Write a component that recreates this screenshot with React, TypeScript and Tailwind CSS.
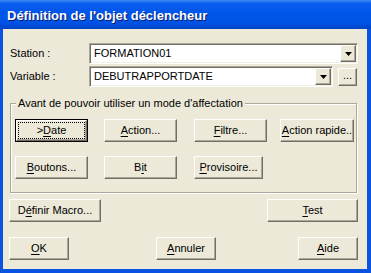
import React from "react";

function Raised({ className = "", children }: { className?: string; children?: React.ReactNode }) {
  return (
    <div
      className={
        "bg-[#ECE9D8] border border-t-white border-l-white border-r-[#716F64] border-b-[#716F64] shadow-[inset_-1px_-1px_0_#ACA899] flex items-center justify-center shrink-0 " +
        className
      }
    >
      {children}
    </div>
  );
}

function DefaultBtn({ className = "", children }: { className?: string; children?: React.ReactNode }) {
  return (
    <div className={"border border-black flex shrink-0 " + className}>
      <div className="relative flex-1 bg-[#ECE9D8] border border-t-white border-l-white border-r-[#716F64] border-b-[#716F64] shadow-[inset_-1px_-1px_0_#ACA899] flex items-center justify-center">
        <div className="absolute inset-[1px] border border-dotted border-black" />
        <span className="relative">{children}</span>
      </div>
    </div>
  );
}

function U({ children }: { children: React.ReactNode }) {
  return <span className="underline underline-offset-[2px] decoration-1">{children}</span>;
}

function Arrow() {
  return (
    <svg width="7" height="4" viewBox="0 0 7 4" className="block">
      <polygon points="0,0 7,0 3.5,4" fill="#000" />
    </svg>
  );
}

function Combo({ className = "", value }: { className?: string; value: string }) {
  return (
    <div
      className={
        "h-[21px] bg-white border border-t-[#ACA899] border-l-[#ACA899] border-b-white border-r-white shadow-[inset_1px_1px_0_#716F64,inset_-1px_-1px_0_#F1EFE2] flex items-stretch p-[1px] shrink-0 " +
        className
      }
    >
      <div className="flex-1 flex items-center pl-[3px] leading-none">{value}</div>
      <Raised className="w-[16px]">
        <Arrow />
      </Raised>
    </div>
  );
}

export default function App() {
  return (
    <div className="w-[371px] h-[273px] bg-[#0A52E0] flex flex-col font-['Liberation_Sans',Arial,sans-serif] text-[11px] text-black">
      <div className="h-[29px] shrink-0 flex items-center pl-[7px] bg-[linear-gradient(180deg,#3D8BF5_0%,#0A5EEE_12%,#0056EA_45%,#0052E4_80%,#0043C6_100%)]">
        <span className="text-white font-bold text-[13px] leading-none [text-shadow:1px_1px_0_#0A1A6E] pt-[1px]">
          Définition de l'objet déclencheur
        </span>
      </div>
      <div className="flex-1 ml-[3px] mr-[4px] mb-[4px] bg-[#ECE9D8] flex flex-col pl-[7px]">
        <div className="mt-[14px] flex items-center">
          <div className="w-[79px]">Station :</div>
          <Combo className="w-[269px]" value="FORMATION01" />
        </div>
        <div className="mt-[2px] flex items-center">
          <div className="w-[79px]">Variable :</div>
          <Combo className="w-[244px]" value="DEBUTRAPPORTDATE" />
          <Raised className="ml-[5px] w-[19px] h-[18px] pb-[3px] leading-none">...</Raised>
        </div>

        <div className="relative mt-[16px] w-[347px] h-[90px] border border-[#ACA899] shadow-[inset_1px_1px_0_#fff,1px_1px_0_#fff] flex flex-col pl-[4px] pt-[15px]">
          <div className="absolute left-[5px] top-[-7px] px-[2px] bg-[#ECE9D8] leading-[13px]">
            Avant de pouvoir utiliser un mode d'affectation
          </div>
          <div className="flex">
            <DefaultBtn className="w-[73px] h-[23px]">
              &gt;<U>D</U>ate
            </DefaultBtn>
            <Raised className="ml-[16px] w-[73px] h-[23px]">
              <span>
                <U>A</U>ction...
              </span>
            </Raised>
            <Raised className="ml-[17px] w-[73px] h-[23px]">
              <span>
                <U>F</U>iltre...
              </span>
            </Raised>
            <Raised className="ml-[13px] w-[74px] h-[23px]">
              <span>
                <U>A</U>ction rapide..
              </span>
            </Raised>
          </div>
          <div className="flex mt-[14px]">
            <Raised className="w-[73px] h-[23px]">
              <span>
                <U>B</U>outons...
              </span>
            </Raised>
            <Raised className="ml-[16px] w-[73px] h-[23px]">
              <span>
                B<U>i</U>t
              </span>
            </Raised>
            <Raised className="ml-[17px] w-[69px] h-[23px]">
              <span>
                <U>P</U>rovisoire...
              </span>
            </Raised>
          </div>
        </div>

        <div className="mt-[6px] flex ml-[-1px]">
          <Raised className="w-[92px] h-[23px]">
            <span>
              D<U>é</U>finir Macro...
            </span>
          </Raised>
          <Raised className="ml-[166px] w-[91px] h-[23px]">
            <span>
              <U>T</U>est
            </span>
          </Raised>
        </div>

        <div className="mt-[15px] flex ml-[-1px]">
          <Raised className="w-[60px] h-[23px]">
            <span>
              <U>O</U>K
            </span>
          </Raised>
          <Raised className="ml-[87px] w-[60px] h-[23px]">
            <span>
              <U>A</U>nnuler
            </span>
          </Raised>
          <Raised className="ml-[82px] w-[60px] h-[23px]">
            <span>
              <U>A</U>ide
            </span>
          </Raised>
        </div>
      </div>
    </div>
  );
}
